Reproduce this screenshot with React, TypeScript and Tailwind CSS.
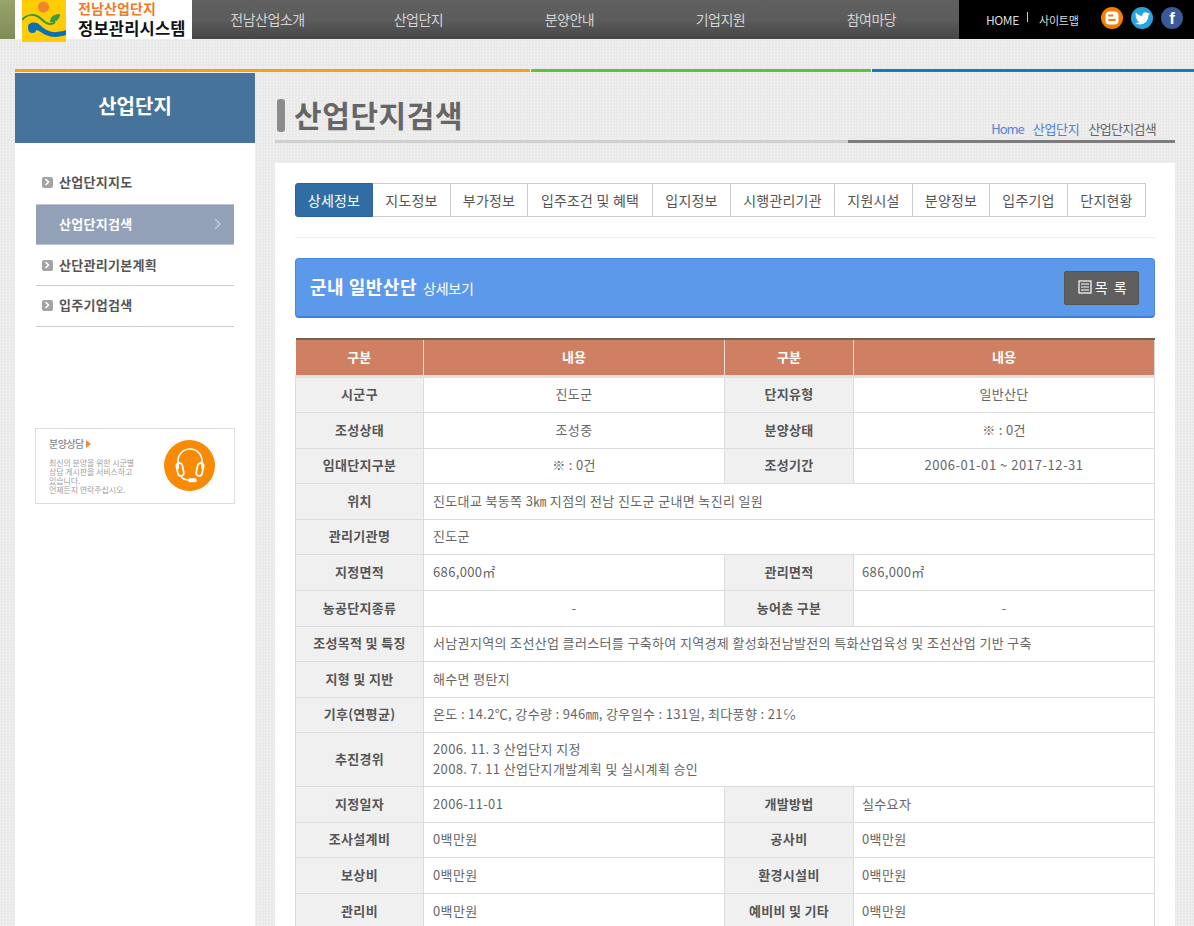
import React from "react";

const font = "font-['Noto_Sans_CJK_KR','Liberation_Sans',sans-serif]";

const nav = ["전남산업소개", "산업단지", "분양안내", "기업지원", "참여마당"];
const tabs: [string, string][] = [
  ["상세정보", "w-[78px]"],
  ["지도정보", "w-[78px]"],
  ["부가정보", "w-[77px]"],
  ["입주조건 및 혜택", "w-[125px]"],
  ["입지정보", "w-[78px]"],
  ["시행관리기관", "w-[104px]"],
  ["지원시설", "w-[78px]"],
  ["분양정보", "w-[77px]"],
  ["입주기업", "w-[78px]"],
  ["단지현황", "w-[78px]"],
];

function Th({ children }: { children: React.ReactNode }) {
  return (
    <th className="bg-[#f0f0f0] border border-[#dcdcdc] text-center text-[13px] font-bold text-[#555] tracking-[0.3px] pb-[1px]">
      {children}
    </th>
  );
}
function Td({ children, pad, span }: { children: React.ReactNode; pad?: "a" | "b"; span?: number }) {
  const align = pad === "a" ? "text-left pl-[9px]" : pad === "b" ? "text-left pl-[8px]" : "text-center";
  return (
    <td
      colSpan={span}
      className={`bg-white border border-[#dcdcdc] text-[13px] text-[#666] tracking-[0.35px] pb-[1px] ${align}`}
    >
      {children}
    </td>
  );
}

function R4({ a, b, c, d, left, h }: { a: string; b: string; c: string; d: React.ReactNode; left?: boolean; h: string }) {
  return (
    <tr className={h}>
      <Th>{a}</Th>
      <Td pad={left ? "a" : undefined}>{b}</Td>
      <Th>{c}</Th>
      <Td pad={left ? "b" : undefined}>{d}</Td>
    </tr>
  );
}
function R2({ a, b, h }: { a: string; b: React.ReactNode; h: string }) {
  return (
    <tr className={h}>
      <Th>{a}</Th>
      <Td pad="a" span={3}>{b}</Td>
    </tr>
  );
}

function Bullet() {
  return (
    <span className="w-[11px] h-[11px] rounded-[2px] bg-[#a3a3a3] flex items-center justify-center mr-[6px]">
      <svg width="7" height="8" viewBox="0 0 7 8"><path d="M1.500 1l3 3-3 3" fill="none" stroke="#fff" strokeWidth="1.600" /></svg>
    </span>
  );
}

export default function App() {
  return (
    <div className={`${font} w-[1194px] h-[926px] overflow-hidden bg-[#e8e8e8] bg-[linear-gradient(#eeeeee_1px,transparent_1px),linear-gradient(90deg,#eeeeee_1px,transparent_1px)] bg-[size:3px_3px] relative`}>
      {/* Header */}
      <header className="flex h-[39px] bg-[#000]">
        <div className="w-[15px] bg-gradient-to-b from-[#96a56a] to-[#7f8c58]" />
        <div className="w-[177px] bg-white flex relative">
          <div className="absolute left-[7px] top-0 w-[44px] h-[42px] bg-[#ffcc05] overflow-hidden">
            <svg width="44" height="42" viewBox="0 0 44 42">
              <circle cx="21.500" cy="7" r="5.500" fill="#f0852d" />
              <path d="M0 20C4 15 10 14 15 16C20 18 22 24 28 24C31 24 32 23 33 22" fill="none" stroke="#2f9a3d" strokeWidth="2" />
              <path d="M28 22C28 16 33 14 38 14C38 19 34 23 28 22z" fill="#3c9a3f" />
              <path d="M6 27C6 22 14 21 18 25C22 29 28 33 35 32C38 31.500 42 31 44 30V35C38 37 30 38 24 35C20 33 16 30 14 30C14 33 11 33 10 33C7 33 6 30 6 27z" fill="#0b6fb3" />
            </svg>
          </div>
          <div className="ml-[63px] flex flex-col">
            <span className="text-[14px] font-bold text-[#f27a24] tracking-[0.1px] leading-[16px]">전남산업단지</span>
            <span className="text-[16.500px] font-bold text-[#111] tracking-[0.2px] mt-[3px] leading-[18px]">정보관리시스템</span>
          </div>
        </div>
        <nav className="w-[767px] flex bg-gradient-to-b from-[#606060] via-[#5c5c5c] to-[#464646]">
          {nav.map((t) => (
            <div key={t} className="w-[151px] flex items-center justify-center text-[14px] text-[#d2d2d2] tracking-[-0.5px] pb-[1px]">{t}</div>
          ))}
        </nav>
        <div className="flex-1 flex items-center text-[#ddd] pl-[27px]">
          <span className="text-[12px] w-[33px] tracking-[-0.4px] mt-[1px]">HOME</span>
          <span className="w-px h-[10px] bg-[#ccc] ml-[8px] mr-[11px] mb-[5px]" />
          <span className="text-[11px] tracking-[-0.2px] w-[42px] mt-[1px]">사이트맵</span>
          <span className="ml-[20px] mb-[3px] w-[22px] h-[22px] rounded-full bg-[#f57d00] flex items-center justify-center">
            <svg width="16" height="16" viewBox="0 0 16 16"><rect x="1.500" y="1.500" width="13" height="13" rx="4" fill="#fff" /><path d="M5 5.500h3.500M5 10h6" stroke="#f57d00" strokeWidth="1.800" strokeLinecap="round" /></svg>
          </span>
          <span className="ml-[8px] mb-[3px] w-[22px] h-[22px] rounded-full bg-[#2aa3dc] flex items-center justify-center">
            <svg width="15" height="13" viewBox="0 0 24 20"><path d="M23.900 2.400a10 10 0 0 1-2.800.8A5 5 0 0 0 23.200.5a9.800 9.800 0 0 1-3.100 1.200 4.900 4.900 0 0 0-8.400 4.500A14 14 0 0 1 1.600.9a4.900 4.900 0 0 0 1.500 6.600 4.900 4.900 0 0 1-2.200-.6c0 2.400 1.700 4.400 4 4.900a4.900 4.900 0 0 1-2.200.1 4.900 4.900 0 0 0 4.600 3.400A9.900 9.900 0 0 1 0 17.300 14 14 0 0 0 7.500 19.500c9 0 14-7.500 14-14v-.6a10 10 0 0 0 2.400-2.500z" fill="#fff" /></svg>
          </span>
          <span className="ml-[8px] mb-[3px] w-[22px] h-[22px] rounded-full bg-[#3b5998] flex items-center justify-center text-white font-['Liberation_Sans'] font-bold text-[17px] leading-none pt-[1px]">f</span>
        </div>
      </header>

      {/* Colored lines */}
      <div className="flex h-[3px] mt-[30px] ml-[15px]">
        <div className="w-[515px] bg-[#f7a01c]" />
        <div className="w-[1px] bg-white" />
        <div className="w-[340px] bg-[#5ec23a]" />
        <div className="w-[1px] bg-white" />
        <div className="flex-1 bg-[#0f7fc4]" />
      </div>

      <div className="flex ml-[15px] mt-[1px]">
        {/* Sidebar */}
        <aside className="w-[240px] h-[853px] bg-white shrink-0">
          <div className="h-[70px] bg-[#46739a] flex items-center justify-center text-white text-[20px] font-bold pb-[4px]">산업단지</div>
          <ul className="mt-[20px] mx-[21px] w-[198px] text-[13px] font-bold text-[#555] tracking-[0.3px]">
            <li className="h-[41px] flex items-center pl-[6px] pb-[3px]"><Bullet />산업단지지도</li>
            <li className="h-[41px] flex items-center justify-between pl-[23px] pr-[12px] pb-[2px] bg-[#92a0b8] border-y border-[#bcc4d2] text-white">
              산업단지검색
              <svg width="8" height="12" viewBox="0 0 8 12"><path d="M1 1l5 5-5 5" fill="none" stroke="#c4ccd9" strokeWidth="1.500" /></svg>
            </li>
            <li className="h-[41px] flex items-center pl-[6px] border-b border-[#ccc]"><Bullet />산단관리기본계획</li>
            <li className="h-[41px] flex items-center pl-[6px] pb-[2px] border-b border-[#ccc]"><Bullet />입주기업검색</li>
          </ul>
          <div className="mt-[101px] mx-[20px] w-[200px] h-[76px] border border-[#ddd] relative flex items-center">
            <div className="ml-[13px] w-[100px] text-[#a0a0a0]">
              <div className="text-[10px] font-medium tracking-[-0.5px] leading-[12px] text-[#888] flex items-center">분양상담<span className="ml-[2px] w-0 h-0 border-y-[4px] border-y-transparent border-l-[5px] border-l-[#f28a3c]" /></div>
              <div className="text-[8px] tracking-[-0.1px] leading-[9px] mt-[8px] whitespace-nowrap">최신의 분양을 위한 시군별<br />상담 게시판을 서비스하고<br />있습니다.<br />언제든지 연락주십시오.</div>
            </div>
            <div className="absolute left-[128px] top-[11px] w-[51px] h-[51px] rounded-full bg-[#f98a05] flex items-center justify-center">
              <svg width="34" height="38" viewBox="0 0 34 38" fill="none" stroke="#fff" strokeWidth="1.700">
                <path d="M5 22v-8a12 12 0 0 1 24 0v8" />
                <rect x="4" y="16" width="6" height="13" rx="3" transform="rotate(-12 7 22)" />
                <rect x="24" y="16" width="6" height="13" rx="3" transform="rotate(12 27 22)" />
                <path d="M8 29c1 3 4 4 9 4" />
                <rect x="16" y="32" width="7" height="2.500" rx="1" fill="#fff" />
              </svg>
            </div>
          </div>
        </aside>

        {/* Main */}
        <main className="ml-[20px] w-[900px] shrink-0">
          <div className="h-[70px] flex relative">
            <div className="absolute left-0 right-0 bottom-0 h-[3px] flex">
              <div className="w-[573px] bg-[#d0d0d0]" />
              <div className="flex-1 bg-[#7d7d7d]" />
            </div>
            <div className="ml-[2px] mt-[26px] w-[8px] h-[33px] rounded-[3px] bg-[#8c8c8c]" />
            <h1 className="ml-[9px] mt-[21px] text-[30px] font-bold text-[#666] tracking-[0.6px] leading-[40px]">산업단지검색</h1>
            <div className="absolute right-[19px] top-[47px] text-[13px] flex gap-[9px] leading-[18px]">
              <span className="text-[#5680d8] tracking-[-1px]">Home</span>
              <span className="text-[#5680d8] tracking-[-0.3px]">산업단지</span>
              <span className="text-[#666] tracking-[-0.7px]">산업단지검색</span>
            </div>
          </div>

          <div className="mt-[20px] bg-white h-[770px] px-[20px] pt-[20px]">
            <div className="flex h-[34px] text-[14px] text-[#555] tracking-[0.2px]">
              {tabs.map(([t, w], i) => (
                <div
                  key={t}
                  className={`${w} flex items-center justify-center ${i === 0 ? "bg-[#2f6da4] text-white rounded-l-[3px] border border-[#2b6395]" : "border-y border-r border-[#ccc]"}`}
                >
                  {t}
                </div>
              ))}
            </div>
            <div className="mt-[20px] h-px bg-[#eee]" />
            <div className="mt-[20px] h-[60px] rounded-[4px] bg-[#5c99ea] border border-[#4a87dc] border-b-2 border-b-[#3d7fdc] flex items-center justify-between pl-[14px] pr-[15px]">
              <div className="flex items-baseline text-white pb-[2px]">
                <span className="text-[18px] font-bold tracking-[0.5px]">군내 일반산단</span>
                <span className="ml-[6px] text-[14px] tracking-[-0.2px]">상세보기</span>
              </div>
              <div className="w-[75px] h-[34px] rounded-[2px] bg-[#5f5f5f] border border-[#555] text-white text-[14px] flex items-center justify-center gap-[3px] pl-[3px] pb-[1px]">
                <svg width="14" height="14" viewBox="0 0 14 14" fill="none" stroke="#fff" strokeWidth="1.200"><rect x="1" y="1" width="12" height="12" /><path d="M3 4h8M3 7h8M3 10h8" /></svg>
                <span className="tracking-[1.500px]">목 록</span>
              </div>
            </div>

            <table className="mt-[20px] w-[859px] table-fixed border-collapse border-t-2 border-t-[#6f6458]">
              <colgroup>
                <col className="w-[128px]" />
                <col className="w-[301px]" />
                <col className="w-[129px]" />
                <col className="w-[301px]" />
              </colgroup>
              <thead>
                <tr className="h-[37px] bg-[#cf8063] text-white text-[13px] font-bold">
                  <th className="border-r border-[#eedcd5] border-b-[3px] border-b-[#e4e0de] pb-[2px]">구분</th>
                  <th className="border-r border-[#eedcd5] border-b-[3px] border-b-[#e4e0de] pb-[2px]">내용</th>
                  <th className="border-r border-[#eedcd5] border-b-[3px] border-b-[#e4e0de] pb-[2px]">구분</th>
                  <th className="border-r border-[#dcdcdc] border-b-[3px] border-b-[#e4e0de] pb-[2px]">내용</th>
                </tr>
              </thead>
              <tbody>
                <R4 h="h-[36px]" a="시군구" b="진도군" c="단지유형" d="일반산단" />
                <R4 h="h-[36px]" a="조성상태" b="조성중" c="분양상태" d="※ : 0건" />
                <R4 h="h-[35px]" a="임대단지구분" b="※ : 0건" c="조성기간" d={<span className="tracking-[0.55px]">2006-01-01 ~ 2017-12-31</span>} />
                <R2 h="h-[36px]" a="위치" b="진도대교 북동쪽 3㎞ 지점의 전남 진도군 군내면 녹진리 일원" />
                <R2 h="h-[35px]" a="관리기관명" b="진도군" />
                <R4 h="h-[36px]" left a="지정면적" b="686,000㎡" c="관리면적" d="686,000㎡" />
                <R4 h="h-[36px]" a="농공단지종류" b="-" c="농어촌 구분" d="-" />
                <R2 h="h-[35px]" a="조성목적 및 특징" b="서남권지역의 조선산업 클러스터를 구축하여 지역경제 활성화전남발전의 특화산업육성 및 조선산업 기반 구축" />
                <R2 h="h-[36px]" a="지형 및 지반" b="해수면 평탄지" />
                <R2 h="h-[35px]" a="기후(연평균)" b="온도 : 14.2℃, 강수량 : 946㎜, 강우일수 : 131일, 최다풍향 : 21℅" />
                <R2 h="h-[54px]" a="추진경위" b={<>2006. 11. 3 산업단지 지정<br />2008. 7. 11 산업단지개발계획 및 실시계획 승인</>} />
                <R4 h="h-[36px]" left a="지정일자" b="2006-11-01" c="개발방법" d="실수요자" />
                <R4 h="h-[35px]" left a="조사설계비" b="0백만원" c="공사비" d="0백만원" />
                <R4 h="h-[36px]" left a="보상비" b="0백만원" c="환경시설비" d="0백만원" />
                <R4 h="h-[36px]" left a="관리비" b="0백만원" c="예비비 및 기타" d="0백만원" />
              </tbody>
            </table>
          </div>
        </main>
      </div>
    </div>
  );
}
